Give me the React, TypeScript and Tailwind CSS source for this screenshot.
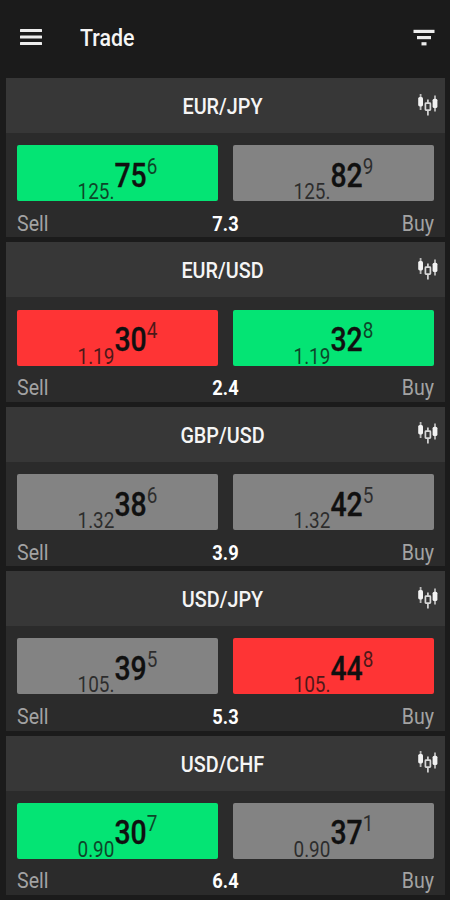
type Tone = "up" | "down" | "flat";

type Price = {
  base: string;
  pips: string;
  point: string;
  tone: Tone;
};

type Quote = {
  pair: string;
  spread: string;
  sell: Price;
  buy: Price;
};

const QUOTES: Quote[] = [
  {
    pair: "EUR/JPY",
    spread: "7.3",
    sell: { base: "125.", pips: "75", point: "6", tone: "up" },
    buy: { base: "125.", pips: "82", point: "9", tone: "flat" },
  },
  {
    pair: "EUR/USD",
    spread: "2.4",
    sell: { base: "1.19", pips: "30", point: "4", tone: "down" },
    buy: { base: "1.19", pips: "32", point: "8", tone: "up" },
  },
  {
    pair: "GBP/USD",
    spread: "3.9",
    sell: { base: "1.32", pips: "38", point: "6", tone: "flat" },
    buy: { base: "1.32", pips: "42", point: "5", tone: "flat" },
  },
  {
    pair: "USD/JPY",
    spread: "5.3",
    sell: { base: "105.", pips: "39", point: "5", tone: "flat" },
    buy: { base: "105.", pips: "44", point: "8", tone: "down" },
  },
  {
    pair: "USD/CHF",
    spread: "6.4",
    sell: { base: "0.90", pips: "30", point: "7", tone: "up" },
    buy: { base: "0.90", pips: "37", point: "1", tone: "flat" },
  },
];

const TONES: Record<Tone, string> = {
  up: "bg-[#04e474]",
  down: "bg-[#fe3435]",
  flat: "bg-[#838383]",
};

function MenuIcon() {
  return (
    <svg width="22" height="18" viewBox="0 0 22 18" fill="#ededed">
      <rect y="0" width="22" height="3" rx="0.5" />
      <rect y="6.5" width="22" height="3" rx="0.5" />
      <rect y="13" width="22" height="3" rx="0.5" />
    </svg>
  );
}

function FilterIcon() {
  return (
    <svg width="22" height="18" viewBox="0 0 22 18" fill="#ededed">
      <rect x="0.5" y="0.8" width="21" height="3.2" />
      <rect x="4" y="7" width="14" height="3.2" />
      <rect x="8.5" y="13.2" width="5" height="3.2" />
    </svg>
  );
}

function CandlesIcon() {
  return (
    <svg width="21" height="24" viewBox="0 0 21 24" fill="#f2f2f2">
      <rect x="1.7" y="0" width="1.8" height="16" opacity="0.7" />
      <rect x="0.2" y="3" width="4.8" height="9.4" rx="1.6" />
      <rect x="9" y="5.5" width="1.8" height="4" opacity="0.8" />
      <rect x="9" y="16.5" width="1.8" height="5" opacity="0.8" />
      <rect x="7.4" y="9.1" width="5" height="7" rx="0.6" fill="none" stroke="#d8d8d8" strokeWidth="1.7" />
      <rect x="16.1" y="1.5" width="1.8" height="16" opacity="0.7" />
      <rect x="14.6" y="4.7" width="4.8" height="9.4" rx="1.6" />
    </svg>
  );
}

function PriceButton({ price }: { price: Price }) {
  return (
    <button
      className={`flex h-14 flex-1 justify-center rounded-[2px] text-[#101010] ${TONES[price.tone]}`}
    >
      <span className="flex scale-x-[0.86] leading-none">
        <span className="pt-[36px] text-[22px] opacity-75">{price.base}</span>
        <span className="pt-[13.5px] text-[33px] font-medium [-webkit-text-stroke:0.3px_#101010]">
          {price.pips}
        </span>
        <span className="pt-[10.5px] text-[22px] opacity-75">{price.point}</span>
      </span>
    </button>
  );
}

function QuoteCard({ quote }: { quote: Quote }) {
  return (
    <section className="h-[159.4px] bg-[#2b2b2b]">
      <div className="grid h-[55px] grid-cols-[33px_1fr_33px] items-center bg-[#373737]">
        <h2 className="col-start-2 -ml-1.5 scale-x-[0.9] pt-0.5 text-center text-[22px] font-medium text-[#f5f5f5]">
          {quote.pair}
        </h2>
        <span className="pl-1.5">
          <CandlesIcon />
        </span>
      </div>
      <div className="flex gap-[15px] pt-[12.2px] pr-[11px] pl-[11px]">
        <PriceButton price={quote.sell} />
        <PriceButton price={quote.buy} />
      </div>
      <div className="grid grid-cols-3 items-center px-[11px] pt-[8.5px] text-[22px] leading-7 text-[#a3a3a3]">
        <span className="origin-left scale-x-[0.89]">Sell</span>
        <span className="scale-x-[0.87] text-center text-[21px] font-bold text-white">
          {quote.spread}
        </span>
        <span className="origin-right scale-x-[0.89] text-right">Buy</span>
      </div>
    </section>
  );
}

export default function App() {
  return (
    <div className="h-[900px] w-[450px] overflow-hidden bg-[#1b1b1b] font-['Roboto',sans-serif]">
      <header className="flex h-[78.1px] items-center pr-[15px] pb-0.5 pl-5">
        <MenuIcon />
        <h1 className="ml-[38px] origin-left scale-x-[0.89] text-2xl font-medium text-[#f5f5f5]">
          Trade
        </h1>
        <span className="ml-auto">
          <FilterIcon />
        </span>
      </header>
      <main className="flex flex-col gap-[5px] pr-[5px] pl-1.5">
        {QUOTES.map((quote) => (
          <QuoteCard key={quote.pair} quote={quote} />
        ))}
      </main>
    </div>
  );
}
